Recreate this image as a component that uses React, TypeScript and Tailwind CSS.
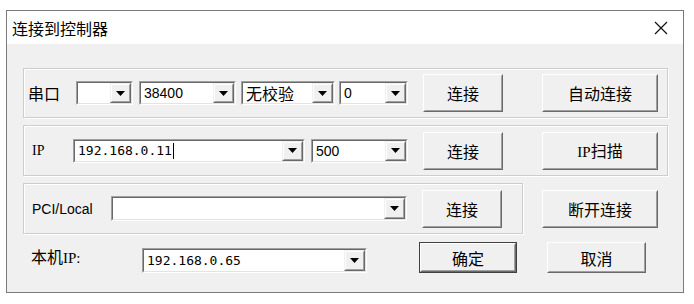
import React from "react";

const CJK = { fontFamily: '"Noto Sans CJK SC", "Microsoft YaHei", sans-serif' };
const MONO = { fontFamily: '"DejaVu Sans Mono", "Noto Sans CJK SC", monospace' };
const SANS = { fontFamily: '"Liberation Sans", "Noto Sans CJK SC", sans-serif' };

function Arrow() {
  return (
    <svg width="9" height="5" viewBox="0 0 9 5">
      <path d="M0 0 H9 L4.5 5 Z" fill="#000" />
    </svg>
  );
}

function Combo({
  w,
  h = 24,
  text,
  font = SANS,
  size = "text-[14px]",
  cursor = false,
}: {
  w: number;
  h?: number;
  text?: string;
  font?: React.CSSProperties;
  size?: string;
  cursor?: boolean;
}) {
  return (
    <div
      className="flex border border-t-[#a0a0a0] border-l-[#a0a0a0] border-r-white border-b-white shrink-0"
      style={{ width: w, height: h }}
    >
      <div className="flex flex-1 border border-t-[#696969] border-l-[#696969] border-r-[#e3e3e3] border-b-[#e3e3e3] bg-white min-w-0">
        <div className={`flex-1 flex items-center pl-[3px] text-black ${size} leading-[18px] whitespace-nowrap`} style={font}>
          {text}
          {cursor && <span className="inline-block w-px h-[16px] bg-black ml-px" />}
        </div>
        <div className="w-[21px] shrink-0 flex border border-t-[#f0f0f0] border-l-[#f0f0f0] border-r-[#696969] border-b-[#696969] bg-[#f0f0f0]">
          <div className="flex-1 flex items-center justify-center border border-t-white border-l-white border-r-[#a0a0a0] border-b-[#a0a0a0]">
            <Arrow />
          </div>
        </div>
      </div>
    </div>
  );
}

function Btn({
  w,
  h = 38,
  label,
  def = false,
}: {
  w: number;
  h?: number;
  label: React.ReactNode;
  def?: boolean;
}) {
  const inner = (
    <div className="flex flex-1 border border-t-white border-l-white border-r-[#696969] border-b-[#696969]">
      <div className="flex flex-1 items-center justify-center border border-t-[#f0f0f0] border-l-[#f0f0f0] border-r-[#a0a0a0] border-b-[#a0a0a0] bg-[#f0f0f0] text-[16px] text-black leading-none" style={CJK}>
        {label}
      </div>
    </div>
  );
  return (
    <div className={`flex shrink-0 ${def ? "border border-[#404040]" : ""}`} style={{ width: w, height: h }}>
      {inner}
    </div>
  );
}

function Group({ w, h, children }: { w: number; h: number; children: React.ReactNode }) {
  return (
    <div
      className="flex items-center border border-[#cdcdcd] shadow-[inset_1px_1px_0_#ffffff,1px_1px_0_#ffffff] shrink-0"
      style={{ width: w, height: h }}
    >
      {children}
    </div>
  );
}

export default function App() {
  return (
    <div className="w-[694px] h-[304px] bg-white pt-[10px] pl-[6px]">
      <div className="w-[678px] h-[283px] border border-[#7a7a7a] bg-[#f0f0f0] flex flex-col">
        {/* title bar */}
        <div className="h-[33px] bg-white flex items-center justify-between shrink-0">
          <span className="ml-[5px] text-[16px] text-black leading-none" style={CJK}>
            连接到控制器
          </span>
          <svg width="14" height="14" viewBox="0 0 14 14" className="mr-[15px]">
            <path d="M1 1 L13 13 M13 1 L1 13" stroke="#111" strokeWidth="1.2" />
          </svg>
        </div>

        {/* row 1 */}
        <div className="ml-[16px] mt-[24px]">
          <Group w={645} h={50}>
            <span className="ml-[4px] w-[48px] text-[16px] leading-none text-black" style={CJK}>
              串口
            </span>
            <Combo w={57} />
            <div className="ml-[6px]">
              <Combo w={97} text="38400" />
            </div>
            <div className="ml-[5px]">
              <Combo w={94} text="无校验" font={CJK} size="text-[16px]" />
            </div>
            <div className="ml-[4px]">
              <Combo w={69} text="0" />
            </div>
            <div className="ml-[15px]">
              <Btn w={80} label="连接" />
            </div>
            <div className="ml-[39px]">
              <Btn w={116} label="自动连接" />
            </div>
          </Group>
        </div>

        {/* row 2 */}
        <div className="ml-[16px] mt-[7px]">
          <Group w={645} h={51}>
            <span className="ml-[8px] w-[41px] text-[14px] leading-none text-black" style={{ fontFamily: '"Liberation Serif", serif' }}>
              IP
            </span>
            <Combo w={232} text="192.168.0.11" font={MONO} size="text-[13px]" cursor />
            <div className="ml-[6px]">
              <Combo w={97} text="500" />
            </div>
            <div className="ml-[15px]">
              <Btn w={80} label="连接" />
            </div>
            <div className="ml-[39px]">
              <Btn
                w={116}
                label={
                  <span>
                    <span style={{ fontFamily: '"Liberation Serif", serif' }} className="text-[15px]">IP</span>扫描
                  </span>
                }
              />
            </div>
          </Group>
        </div>

        {/* row 3 */}
        <div className="ml-[16px] mt-[7px] flex items-center">
          <Group w={500} h={51}>
            <span className="ml-[8px] w-[79px] text-[14px] leading-none text-black" style={SANS}>
              PCI/Local
            </span>
            <Combo w={296} h={25} />
            <div className="ml-[15px]">
              <Btn w={80} label="连接" />
            </div>
          </Group>
          <div className="ml-[19px]">
            <Btn w={116} label="断开连接" />
          </div>
        </div>

        {/* row 4 */}
        <div className="ml-[24px] mt-[8px] flex items-center h-[31px]">
          <span className="w-[111px] text-[16px] leading-none text-black -mt-[2px]" style={CJK}>
            本机<span style={{ fontFamily: '"Liberation Serif", serif' }} className="text-[15px]">IP:</span>
          </span>
          <div className="mt-[6px]">
            <Combo w={225} h={25} text="192.168.0.65" font={MONO} size="text-[13px]" />
          </div>
          <div className="ml-[52px]">
            <Btn w={98} h={31} label="确定" def />
          </div>
          <div className="ml-[30px]">
            <Btn w={99} h={31} label="取消" />
          </div>
        </div>
      </div>
    </div>
  );
}
